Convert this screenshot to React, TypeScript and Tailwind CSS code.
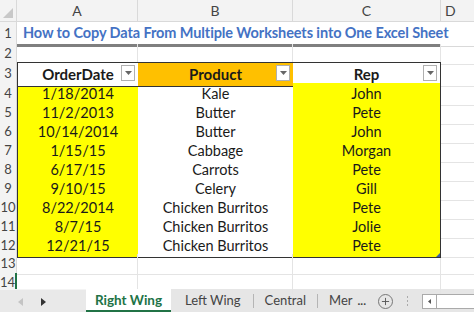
import { Plus } from 'lucide-react';

const ROWS = [
  { n: 4, date: '1/18/2014', product: 'Kale', rep: 'John' },
  { n: 5, date: '11/2/2013', product: 'Butter', rep: 'Pete' },
  { n: 6, date: '10/14/2014', product: 'Butter', rep: 'John' },
  { n: 7, date: '1/15/15', product: 'Cabbage', rep: 'Morgan' },
  { n: 8, date: '6/17/15', product: 'Carrots', rep: 'Pete' },
  { n: 9, date: '9/10/15', product: 'Celery', rep: 'Gill' },
  { n: 10, date: '8/22/2014', product: 'Chicken Burritos', rep: 'Pete' },
  { n: 11, date: '8/7/15', product: 'Chicken Burritos', rep: 'Jolie' },
  { n: 12, date: '12/21/15', product: 'Chicken Burritos', rep: 'Pete' },
];

const COLS = 'grid grid-cols-[17px_121px_155px_148px_1fr]';

function RowNum({ n, active }: { n: number; active?: boolean }) {
  return (
    <div
      className={`flex items-center justify-center border-b border-r bg-[#f3f3f3] text-[13px] text-[#444] ${
        active ? 'border-r-2 border-r-[#217346] border-b-[#d9d9d9]' : 'border-[#d9d9d9]'
      }`}
    >
      {n}
    </div>
  );
}

function FilterBtn() {
  return (
    <span className="absolute right-[3px] top-[2px] flex h-[16px] w-[14px] items-center justify-center border border-[#b0b0b0] bg-white">
      <svg width="7" height="4" viewBox="0 0 7 4">
        <path d="M0 0h7L3.5 4z" fill="#666" />
      </svg>
    </span>
  );
}

export default function App() {
  return (
    <div
      className="h-[312px] w-[474px] overflow-hidden bg-white text-[#1a1a1a]"
      style={{ fontFamily: 'Lato, "Open Sans", sans-serif' }}
    >
      {/* column headers */}
      <div className={`${COLS} h-[22px] bg-[#f3f3f3] text-[14px] text-[#444]`}>
        <div className="relative border-b border-r border-[#d9d9d9]">
          <svg className="absolute bottom-[3px] right-[3px]" width="10" height="10" viewBox="0 0 10 10">
            <path d="M10 0v10H0z" fill="#c8c8c8" />
          </svg>
        </div>
        <div className="flex items-center justify-center border-b border-r border-[#d9d9d9]">A</div>
        <div className="flex items-center justify-center border-b border-r border-[#d9d9d9]">B</div>
        <div className="flex items-center justify-center border-b border-r border-[#d9d9d9]">C</div>
        <div className="flex items-center pl-[4px] border-b border-[#d9d9d9]">D</div>
      </div>

      {/* row 1 title */}
      <div className={`${COLS} h-[22px]`}>
        <RowNum n={1} />
        <div className="col-span-3 flex items-center border-b-[3px] border-[#7f7f7f] pl-[6px] text-[14.5px] font-bold tracking-[-0.1px] text-[#4472c4] whitespace-nowrap">
          How to Copy Data From Multiple Worksheets into One Excel Sheet
        </div>
        <div className="border-b border-[#d9d9d9]" />
      </div>

      {/* row 2 */}
      <div className={`${COLS} h-[18px]`}>
        <RowNum n={2} />
        <div className="border-b border-r border-[#e4e4e4]" />
        <div className="border-b border-r border-[#e4e4e4]" />
        <div className="border-b border-r border-[#e4e4e4]" />
        <div className="border-b border-[#e4e4e4]" />
      </div>

      {/* row 3 headers */}
      <div className={`${COLS} h-[21px]`}>
        <RowNum n={3} />
        <div className="relative flex items-center justify-center border-y border-l border-[#333] bg-white text-[15px] font-bold">
          OrderDate
          <FilterBtn />
        </div>
        <div className="relative flex items-center justify-center border-y border-[#333] bg-[#ffc000] text-[15px] font-bold">
          Product
          <FilterBtn />
        </div>
        <div className="relative flex items-center justify-center border-y border-r border-[#333] bg-white text-[15px] font-bold">
          Rep
          <FilterBtn />
        </div>
        <div className="border-b border-[#e4e4e4]" />
      </div>

      {/* data rows */}
      {ROWS.map((r, i) => {
        const last = i === ROWS.length - 1;
        const bb = last ? 'border-b border-b-[#333]' : 'border-b border-b-[#c9d5ec]';
        return (
          <div key={r.n} className={`${COLS} h-[19px] text-[14.5px]`}>
            <RowNum n={r.n} />
            <div className={`flex items-center justify-center border-l border-l-[#333] bg-[#ffff00] ${bb}`}>
              {r.date}
            </div>
            <div className={`flex items-center justify-center bg-white ${bb}`}>{r.product}</div>
            <div className={`relative flex items-center justify-center border-r border-r-[#333] bg-[#ffff00] ${bb}`}>
              {r.rep}
              {last && (
                <svg className="absolute bottom-0 right-0" width="4" height="4" viewBox="0 0 4 4">
                  <path d="M4 0v4H0z" fill="#3b5ba8" />
                </svg>
              )}
            </div>
            <div className="border-b border-[#e4e4e4]" />
          </div>
        );
      })}

      {/* rows 13-14 */}
      <div className={`${COLS} h-[19px]`}>
        <RowNum n={13} />
        <div className="border-b border-r border-[#e4e4e4]" />
        <div className="border-b border-r border-[#e4e4e4]" />
        <div className="border-b border-r border-[#e4e4e4]" />
        <div className="border-b border-[#e4e4e4]" />
      </div>
      <div className={`${COLS} h-[16px]`}>
        <RowNum n={14} active />
        <div className="border-r border-[#e4e4e4]" />
        <div className="border-r border-[#e4e4e4]" />
        <div className="border-r border-[#e4e4e4]" />
        <div />
      </div>

      {/* sheet tabs */}
      <div className="flex h-[24px] items-stretch whitespace-nowrap bg-[#e6e6e6] text-[13px] text-[#444]">
        <div className="flex w-[86px] shrink-0 items-center gap-[18px] border-t border-[#f4f4f4] bg-[#e9e9e9] pl-[18px]">
          <svg width="5" height="8" viewBox="0 0 5 8">
            <path d="M5 0v8L0 4z" fill="#c4c4c4" />
          </svg>
          <svg width="5" height="8" viewBox="0 0 5 8">
            <path d="M0 0v8l5-4z" fill="#333" />
          </svg>
        </div>
        <div className="flex w-[85px] shrink-0 items-center justify-center border-b-[3px] border-[#217346] bg-white pt-[2px] text-[13.5px] font-bold text-[#217346]">
          Right Wing
        </div>
        <div className="flex shrink-0 items-center">
          <span className="pl-[14px] pr-[12px]">Left Wing</span>
          <span className="h-[14px] w-px bg-[#b5b5b5]" />
          <span className="px-[11px]">Central</span>
          <span className="h-[14px] w-px bg-[#b5b5b5]" />
          <span className="pl-[11px]">Mer</span>
          <span className="pl-[5px] text-[12px] font-bold">...</span>
          <span className="ml-[12px] flex h-[15px] w-[15px] items-center justify-center rounded-full border border-[#777]">
            <Plus size={11} strokeWidth={2} color="#555" />
          </span>
          <span className="ml-[14px] flex flex-col gap-[2px]">
            <span className="h-[2px] w-[1px] bg-[#aaa]" />
            <span className="h-[2px] w-[1px] bg-[#aaa]" />
            <span className="h-[2px] w-[1px] bg-[#aaa]" />
          </span>
          <span className="ml-[14px] flex h-[15px] w-[15px] items-center justify-center border border-[#aaa] bg-white">
            <svg width="3" height="5" viewBox="0 0 3 5">
              <path d="M3 0v5L0 2.5z" fill="#555" />
            </svg>
          </span>
          <span className="h-[15px] w-[60px] border-y border-[#aaa] bg-white" />
        </div>
      </div>
    </div>
  );
}
